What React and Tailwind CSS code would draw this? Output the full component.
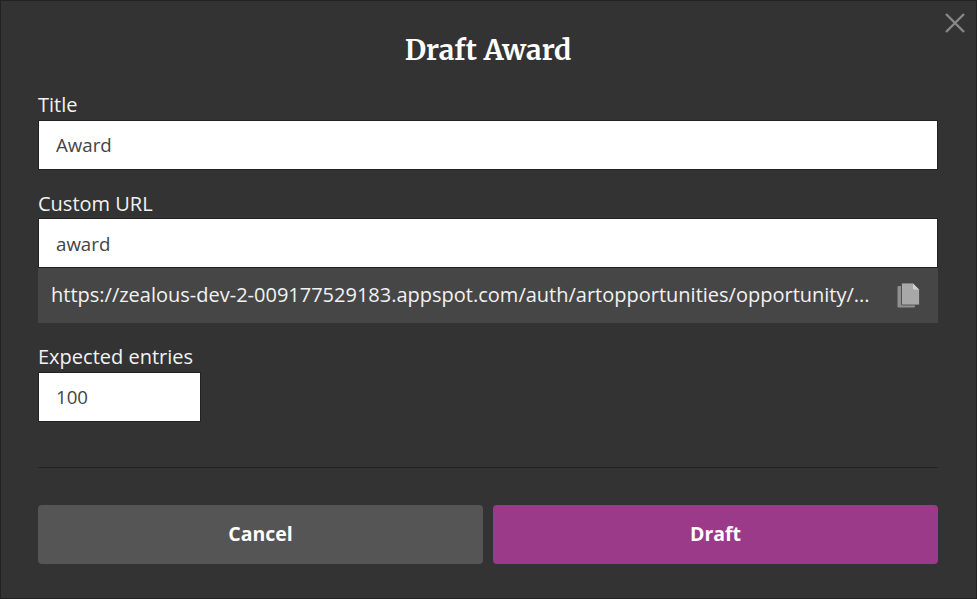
import React from 'react';

function Field({ label, value, className, labelClass }) {
  return (
    <div>
      <label className={`block text-[20px] leading-[23px] text-[#f2f2f2] ${labelClass}`}>{label}</label>
      <input
        readOnly
        value={value}
        className={`block h-[50px] bg-white border border-[#222] px-[17px] text-[18.7px] text-[#444] outline-none ${className}`}
      />
    </div>
  );
}

export default function App() {
  return (
    <div className="relative h-[599px] w-[977px] overflow-hidden bg-[#333333] pl-[37px] pr-[38px] font-['Open_Sans',sans-serif] border border-[#222]">
      <button className="absolute right-[10px] top-[11px] text-[#888]">
        <svg width="22" height="22" viewBox="0 0 22 22" fill="none" stroke="currentColor" strokeWidth="2.4">
          <path d="M2 2l18 18M20 2L2 20" />
        </svg>
      </button>

      <h1 className="pt-[29px] text-center font-['Merriweather','Liberation_Serif',serif] text-[28px] font-bold leading-[40px] text-white">
        Draft Award
      </h1>

      <div className="mt-[23px]">
        <Field label="Title" value="Award" labelClass="pb-[4px]" className="w-full pb-[2px]" />
      </div>

      <div className="mt-[22px]">
        <Field label="Custom URL" value="award" labelClass="pb-[3px]" className="w-full" />
        <div className="flex h-[55px] items-center justify-between bg-[#464646] pl-[13px] pr-[18px] text-[20px] leading-[26px] text-[#f2f2f2]">
          <span className="-translate-y-px">https://zealous-dev-2-009177529183.appspot.com/auth/artopportunities/opportunity/...</span>
          <svg width="23" height="25" viewBox="0 0 23 25">
            <path d="M1.500 3H4v19h14v1.500a1 1 0 0 1-1 1H1.500a1 1 0 0 1-1-1V4a1 1 0 0 1 1-1z" fill="#8f8f8f" />
            <path d="M5.500 0H16l6.500 6.500V21a1 1 0 0 1-1 1H5.500a1 1 0 0 1-1-1V1a1 1 0 0 1 1-1z" fill="#a8a8a8" stroke="#464646" strokeWidth="0.8" />
            <path d="M16 0.500v5a1 1 0 0 0 1 1h5z" fill="#d0d0d0" />
          </svg>
        </div>
      </div>

      <div className="mt-[22px]">
        <Field label="Expected entries" value="100" labelClass="pb-[4px]" className="w-[163px] pb-[2px]" />
      </div>

      <div className="mt-[45px] border-t border-[#222]" />

      <div className="mt-[37px] flex gap-[10px]">
        <button className="h-[59px] flex-1 rounded-[4px] bg-[#555555] pb-[2px] text-[19.5px] font-bold text-white">Cancel</button>
        <button className="h-[59px] flex-1 rounded-[4px] bg-[#9c3a8a] pb-[2px] text-[19.5px] font-bold text-white">Draft</button>
      </div>
    </div>
  );
}
